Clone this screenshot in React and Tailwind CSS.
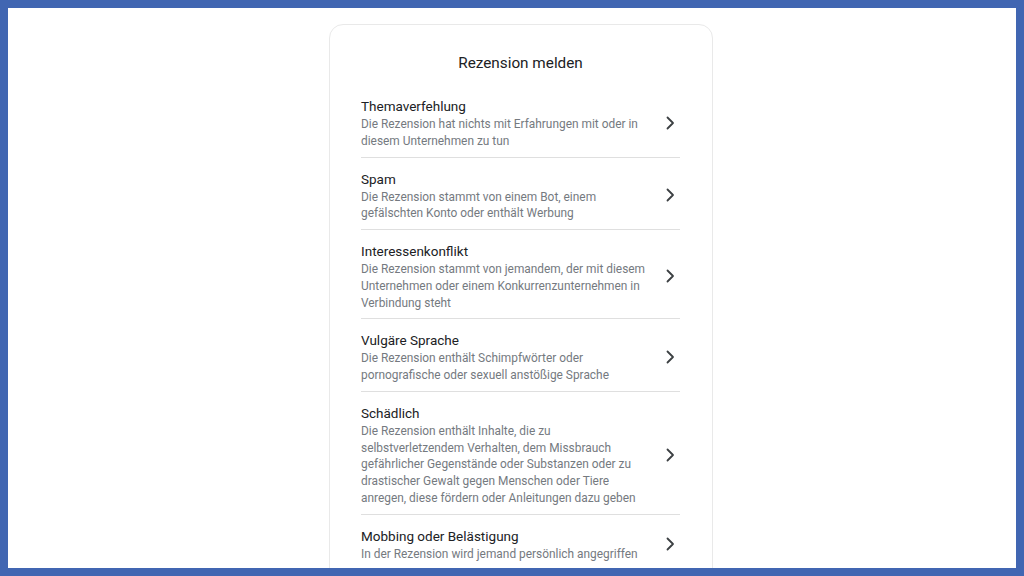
import React from "react";

const items = [
  {
    title: "Themaverfehlung",
    desc: ["Die Rezension hat nichts mit Erfahrungen mit oder in", "diesem Unternehmen zu tun"],
  },
  {
    title: "Spam",
    desc: ["Die Rezension stammt von einem Bot, einem", "gefälschten Konto oder enthält Werbung"],
  },
  {
    title: "Interessenkonflikt",
    desc: [
      "Die Rezension stammt von jemandem, der mit diesem",
      "Unternehmen oder einem Konkurrenzunternehmen in",
      "Verbindung steht",
    ],
  },
  {
    title: "Vulgäre Sprache",
    desc: ["Die Rezension enthält Schimpfwörter oder", "pornografische oder sexuell anstößige Sprache"],
  },
  {
    title: "Schädlich",
    desc: [
      "Die Rezension enthält Inhalte, die zu",
      "selbstverletzendem Verhalten, dem Missbrauch",
      "gefährlicher Gegenstände oder Substanzen oder zu",
      "drastischer Gewalt gegen Menschen oder Tiere",
      "anregen, diese fördern oder Anleitungen dazu geben",
    ],
  },
  {
    title: "Mobbing oder Belästigung",
    desc: ["In der Rezension wird jemand persönlich angegriffen"],
  },
];

function Chevron() {
  return (
    <svg width="10" height="16" viewBox="0 0 10 16" fill="none" className="shrink-0">
      <path d="M2.5 2.5 L8 8 L2.5 13.5" stroke="#3c4043" strokeWidth="1.8" strokeLinecap="round" strokeLinejoin="round" />
    </svg>
  );
}

export default function App() {
  return (
    <div className="h-screen w-full bg-[#4166b2] p-2" style={{ fontFamily: "Roboto, 'Noto Sans', Arial, sans-serif" }}>
      <div className="h-full w-full bg-white overflow-hidden flex justify-center pl-[18px]">
        <div className="mt-4 w-[384px] shrink-0 rounded-[14px] border border-[#e9e9e9] pl-[31px] pr-8 pt-[26px] h-[600px]">
          <h1 className="text-center text-[15.3px] leading-6 text-[#202124] mb-[10px]">Rezension melden</h1>
          <div>
            {items.map((it, i) => (
              <div
                key={i}
                className={`flex items-center justify-between pt-[11px] pb-[7px] ${i < items.length - 1 ? "border-b border-[#dfdfdf]" : ""}`}
              >
                <div>
                  <div className="text-[13.5px] leading-5 text-[#202124]">{it.title}</div>
                  {it.desc.map((d, j) => (
                    <div key={j} className="text-[11.9px] leading-[16.75px] text-[#757a7f] whitespace-nowrap">
                      {d}
                    </div>
                  ))}
                </div>
                <div className="mr-[5px]">
                  <Chevron />
                </div>
              </div>
            ))}
          </div>
        </div>
      </div>
    </div>
  );
}
